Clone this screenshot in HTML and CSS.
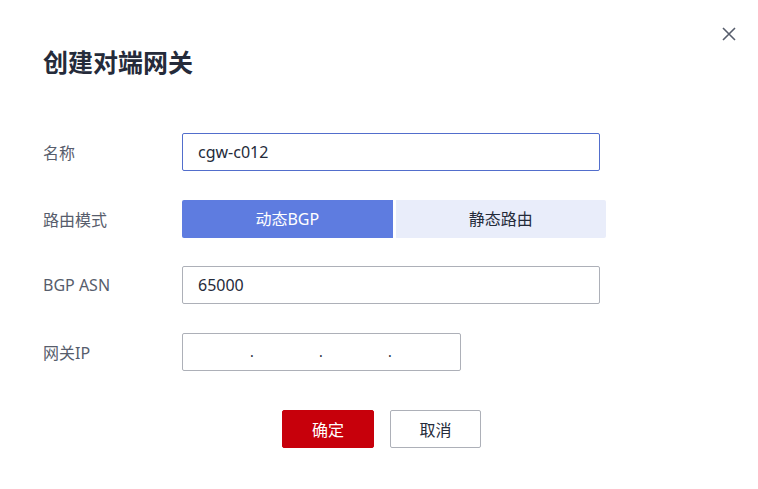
FILE: index.html
```html
<!DOCTYPE html>
<html>
<head>
    <title>创建对端网关</title>
    <link rel="stylesheet" href="styles.css">
</head>
<body>
    <div class="dialog">
        <button class="close" aria-label="关闭">
            <svg width="16" height="16" viewBox="0 0 16 16">
                <path d="M2 2 L14 14 M14 2 L2 14" stroke="#575d6c" stroke-width="1.6" fill="none"/>
            </svg>
        </button>

        <h1 class="title">创建对端网关</h1>

        <form class="form">
            <div class="row">
                <label class="label">名称</label>
                <div class="field">
                    <input class="input input-focus" type="text" value="cgw-c012">
                </div>
            </div>

            <div class="row row-tight">
                <label class="label">路由模式</label>
                <div class="field segment">
                    <span class="seg seg-active">动态BGP</span>
                    <span class="seg">静态路由</span>
                </div>
            </div>

            <div class="row">
                <label class="label">BGP ASN</label>
                <div class="field">
                    <input class="input" type="text" value="65000">
                </div>
            </div>

            <div class="row">
                <label class="label">网关IP</label>
                <div class="field">
                    <div class="ip-box">
                        <span class="ip-part"></span><span class="dot">.</span>
                        <span class="ip-part"></span><span class="dot">.</span>
                        <span class="ip-part"></span><span class="dot">.</span>
                        <span class="ip-part"></span>
                    </div>
                </div>
            </div>

            <div class="actions">
                <button type="button" class="btn btn-primary">确定</button>
                <button type="button" class="btn btn-default">取消</button>
            </div>
        </form>
    </div>
</body>
</html>
```

FILE: styles.css
```css
:root {
    --text: #252b3a;
    --label: #575d6c;
    --border: #adb0b8;
    --brand: #5e7ce0;
    --focus: #526ecc;
    --danger: #c7000b;
}

body {
    margin: 0;
    background: #fff;
    font-family: "Noto Sans", "Noto Sans CJK SC", sans-serif;
    color: var(--text);
}

.dialog {
    position: relative;
    width: 758px;
    height: 489px;
    padding: 44px 0 0 43px;
    box-sizing: border-box;
}

.close {
    position: absolute;
    top: 26px;
    right: 21px;
    border: none;
    background: none;
    padding: 0;
    width: 16px;
    height: 16px;
    cursor: pointer;
}

.close svg {
    display: block;
}

.title {
    margin: 0;
    font-size: 25px;
    line-height: 36px;
    font-weight: 700;
    color: var(--text);
}

.form {
    margin-top: 53px;
}

.row {
    display: flex;
    align-items: center;
    height: 38px;
    margin-bottom: 29px;
}

.row-tight {
    margin-bottom: 28px;
}

.label {
    width: 139px;
    font-size: 16px;
    color: var(--label);
}

.field {
    width: 418px;
}

.input {
    display: block;
    width: 100%;
    height: 38px;
    box-sizing: border-box;
    border: 1px solid var(--border);
    border-radius: 2px;
    padding: 0 15px;
    font-family: inherit;
    font-size: 16px;
    color: var(--text);
    outline: none;
}

.input-focus {
    border-color: var(--focus);
}

.segment {
    display: flex;
    gap: 3px;
    width: 424px;
}

.seg {
    flex: 1;
    height: 38px;
    line-height: 38px;
    text-align: center;
    font-size: 16px;
    background: #e9edfa;
    color: var(--text);
    border-radius: 0 2px 2px 0;
}

.seg-active {
    background: var(--brand);
    color: #fff;
    border-radius: 2px 0 0 2px;
}

.ip-box {
    display: flex;
    align-items: center;
    width: 279px;
    height: 38px;
    box-sizing: border-box;
    border: 1px solid var(--border);
    border-radius: 2px;
}

.ip-part {
    width: 67px;
}

.ip-part:first-child {
    width: 67px;
}

.ip-part:last-child {
    width: auto;
}

.dot {
    width: 2px;
    font-size: 14px;
    line-height: 1;
    color: var(--text);
}

.actions {
    display: flex;
    gap: 16px;
    margin-left: 239px;
    margin-top: 39px;
}

.btn {
    height: 38px;
    box-sizing: border-box;
    border-radius: 2px;
    font-family: inherit;
    font-size: 16px;
    cursor: pointer;
}

.btn-primary {
    width: 92px;
    background: var(--danger);
    border: 1px solid var(--danger);
    color: #fff;
}

.btn-default {
    width: 91px;
    background: #fff;
    border: 1px solid var(--border);
    color: var(--text);
}
```
